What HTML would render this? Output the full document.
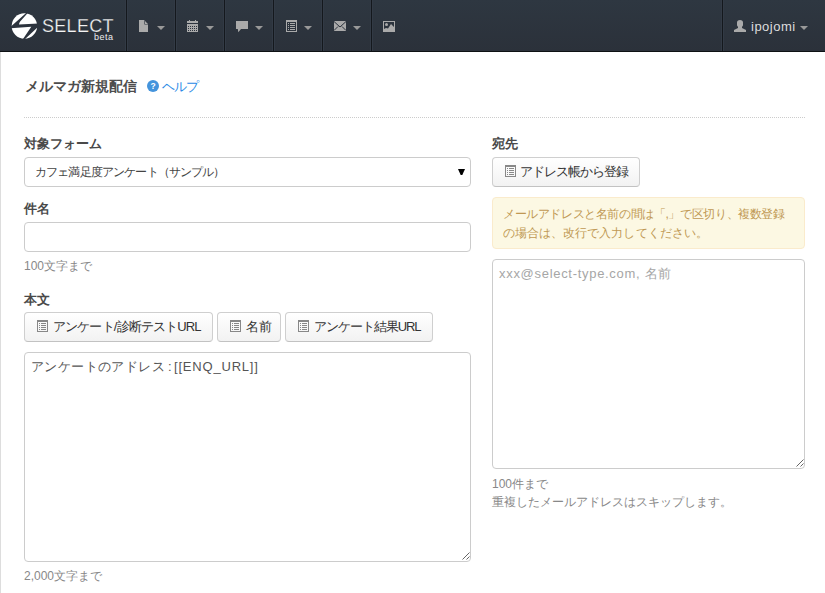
<!DOCTYPE html>
<html><head><meta charset="utf-8">
<style>
*{box-sizing:border-box;margin:0;padding:0}
html,body{width:825px;height:593px;overflow:hidden;background:#fff}
body{position:relative;font-family:"Liberation Sans",sans-serif;color:#555;font-size:13px}
.a{position:absolute;white-space:nowrap;line-height:1}
#nav{position:absolute;left:0;top:0;width:825px;height:52px;background:linear-gradient(#2e3741,#2b313a);border-bottom:1px solid #0e1114}
.sep{position:absolute;top:0;width:1px;height:51px;background:#14181d;box-shadow:1px 0 0 #323a45,-1px 0 0 #323a45}
.caret{position:absolute;top:26px;width:0;height:0;border-left:4px solid transparent;border-right:4px solid transparent;border-top:4px solid #999}
#lb{position:absolute;left:0;top:52px;width:1px;height:541px;background:#ddd}
.lbl{font-weight:bold;color:#4a4a4a;font-size:13px}
.box{position:absolute;border:1px solid #ccc;border-radius:4px;background:#fff}
.btn{position:absolute;border:1px solid #cfcfcf;border-bottom-color:#c2c2c2;border-radius:4px;background:linear-gradient(#fff,#f2f2f2);height:30px}
.bt{font-size:13px;color:#333}
.grip{position:absolute;width:8px;height:8px}
.help{color:#888;font-size:12px}
</style></head><body>
<div id="nav">
  <svg style="position:absolute;left:8px;top:10px" width="32" height="32" viewBox="0 0 593 593">
    <circle cx="304" cy="295" r="236" fill="#fff"/>
    <path d="M352 40 L378 40 L225 215 Q205 245 205 268 L560 248 L560 312 L312 540 L275 540 L432 310 L48 338 L48 310 Z" fill="#2c333d"/>
  </svg>
  <div class="a" style="left:42px;top:17px;font-size:18px;color:#f4f4f4;letter-spacing:0.3px;-webkit-text-stroke:0.25px #2d343e">SELECT</div>
  <div class="a" style="left:94px;top:33px;font-size:9px;color:#eee;letter-spacing:0.5px">beta</div>
  <div class="sep" style="left:126px"></div>
  <div class="sep" style="left:175px"></div>
  <div class="sep" style="left:224px"></div>
  <div class="sep" style="left:273px"></div>
  <div class="sep" style="left:322px"></div>
  <div class="sep" style="left:371px"></div>
  <div class="sep" style="left:722px"></div>
  <!-- file icon -->
  <svg style="position:absolute;left:139px;top:20px" width="9" height="12"><path d="M0 0H5.4V4.6H9V12H0Z M6 1V4H9Z" fill="#aaa"/></svg>
  <div class="caret" style="left:157px"></div>
  <!-- calendar -->
  <svg style="position:absolute;left:187px;top:19px" width="11" height="14"><path d="M0 2H11V4H0Z M2 1h1v1H2Z M8 1h1v1H8Z M0 5H11V13H0Z" fill="#aaa"/><g fill="#2c333d"><rect x="1" y="7" width="1" height="1"/><rect x="3" y="7" width="1" height="1"/><rect x="5" y="7" width="1" height="1"/><rect x="7" y="7" width="1" height="1"/><rect x="9" y="7" width="1" height="1"/><rect x="1" y="9" width="1" height="1"/><rect x="3" y="9" width="1" height="1"/><rect x="5" y="9" width="1" height="1"/><rect x="7" y="9" width="1" height="1"/><rect x="9" y="9" width="1" height="1"/><rect x="1" y="11" width="1" height="1"/><rect x="3" y="11" width="1" height="1"/><rect x="5" y="11" width="1" height="1"/><rect x="7" y="11" width="1" height="1"/><rect x="9" y="11" width="1" height="1"/></g></svg>
  <div class="caret" style="left:206px"></div>
  <!-- comment -->
  <svg style="position:absolute;left:236px;top:21px" width="12" height="12"><path d="M0 0H12V8H5L2.3 11.3L1.8 8H0Z" fill="#aaa"/></svg>
  <div class="caret" style="left:255px"></div>
  <!-- list-alt -->
  <svg style="position:absolute;left:286px;top:20px" width="11" height="12"><path d="M0 0H11V12H0Z M1 2V11H10V2Z" fill="#aaa" fill-rule="evenodd"/>
    <g fill="#aaa"><rect x="2" y="3" width="1" height="1"/><rect x="4" y="3" width="5" height="1"/><rect x="2" y="5" width="1" height="1"/><rect x="4" y="5" width="5" height="1"/><rect x="2" y="7" width="1" height="1"/><rect x="4" y="7" width="5" height="1"/><rect x="2" y="9" width="1" height="1"/><rect x="4" y="9" width="5" height="1"/></g></svg>
  <div class="caret" style="left:304px"></div>
  <!-- envelope -->
  <svg style="position:absolute;left:334px;top:21px" width="12" height="10"><rect width="12" height="10" fill="#aaa"/><path d="M0 0.5L6 6L12 0.5 M0 9.5L4 5.5 M12 9.5L8 5.5" stroke="#2c333d" stroke-width="1" fill="none"/></svg>
  <div class="caret" style="left:353px"></div>
  <!-- picture -->
  <svg style="position:absolute;left:383px;top:21px" width="12" height="11"><path d="M0 0H12V11H0Z M1 1V10H11V1Z" fill="#aaa" fill-rule="evenodd"/><circle cx="3.5" cy="3.5" r="1.5" fill="#aaa"/><path d="M1 8L3 7L5 7.5L8 3L11 6V10H1Z" fill="#aaa"/></svg>
  <!-- user -->
  <svg style="position:absolute;left:734px;top:20px" width="12" height="12"><path d="M3 2.5Q3 0 6 0Q9 0 9 2.5V5Q9 6 8 6.8V8L12 10V12H0V10L4 8V6.8Q3 6 3 5Z" fill="#aaa"/></svg>
  <div class="a" style="left:751px;top:20px;font-size:13px;color:#ddd;letter-spacing:0.5px">ipojomi</div>
  <div class="caret" style="left:800px"></div>
</div>
<div id="lb"></div>

<div class="a lbl" style="left:25px;top:79px;font-size:14px;color:#4d4d4d">メルマガ新規配信</div>
<svg style="position:absolute;left:147px;top:80px" width="12" height="12"><circle cx="6" cy="6" r="6" fill="#4494dc"/><text x="6" y="9.2" font-size="8.5" font-weight="bold" text-anchor="middle" fill="#fff" font-family="Liberation Sans">?</text></svg>
<div class="a" style="left:162px;top:80px;font-size:13px;color:#2a8ae6;letter-spacing:-1px">ヘルプ</div>
<div style="position:absolute;left:24px;top:117px;width:781px;height:0;border-top:1px dotted #ccc"></div>

<div class="a lbl" style="left:24px;top:137px">対象フォーム</div>
<div class="box" style="left:24px;top:157px;width:447px;height:30px"></div>
<div class="a" style="left:35px;top:166px;font-size:12px;color:#444;letter-spacing:-0.85px">カフェ満足度アンケート（サンプル）</div>
<svg style="position:absolute;left:458px;top:169px" width="7" height="6"><path d="M0 0H7L4.3 6H2.7Z" fill="#000"/></svg>

<div class="a lbl" style="left:24px;top:202px">件名</div>
<div class="box" style="left:24px;top:222px;width:447px;height:30px"></div>
<div class="a help" style="left:24px;top:260px">100文字まで</div>

<div class="a lbl" style="left:24px;top:293px">本文</div>
<div class="btn" style="left:24px;top:312px;width:189px"></div>
<div class="btn" style="left:217px;top:312px;width:64px"></div>
<div class="btn" style="left:285px;top:312px;width:148px"></div>
<svg style="position:absolute;left:37px;top:320px" width="11" height="12"><path d="M0 0H11V12H0Z M1 2V11H10V2Z" fill="#888" fill-rule="evenodd"/><g fill="#888"><rect x="2" y="3" width="1" height="1"/><rect x="4" y="3" width="5" height="1"/><rect x="2" y="5" width="1" height="1"/><rect x="4" y="5" width="5" height="1"/><rect x="2" y="7" width="1" height="1"/><rect x="4" y="7" width="5" height="1"/><rect x="2" y="9" width="1" height="1"/><rect x="4" y="9" width="5" height="1"/></g></svg><div class="a bt" style="left:53px;top:320px;letter-spacing:-0.85px">アンケート/診断テストURL</div><svg style="position:absolute;left:230px;top:320px" width="11" height="12"><path d="M0 0H11V12H0Z M1 2V11H10V2Z" fill="#888" fill-rule="evenodd"/><g fill="#888"><rect x="2" y="3" width="1" height="1"/><rect x="4" y="3" width="5" height="1"/><rect x="2" y="5" width="1" height="1"/><rect x="4" y="5" width="5" height="1"/><rect x="2" y="7" width="1" height="1"/><rect x="4" y="7" width="5" height="1"/><rect x="2" y="9" width="1" height="1"/><rect x="4" y="9" width="5" height="1"/></g></svg><div class="a bt" style="left:246px;top:320px">名前</div><svg style="position:absolute;left:298px;top:320px" width="11" height="12"><path d="M0 0H11V12H0Z M1 2V11H10V2Z" fill="#888" fill-rule="evenodd"/><g fill="#888"><rect x="2" y="3" width="1" height="1"/><rect x="4" y="3" width="5" height="1"/><rect x="2" y="5" width="1" height="1"/><rect x="4" y="5" width="5" height="1"/><rect x="2" y="7" width="1" height="1"/><rect x="4" y="7" width="5" height="1"/><rect x="2" y="9" width="1" height="1"/><rect x="4" y="9" width="5" height="1"/></g></svg><div class="a bt" style="left:314px;top:320px;letter-spacing:-1.05px">アンケート結果URL</div>
<div class="box" style="left:24px;top:352px;width:447px;height:210px"></div>
<div class="a" style="left:31px;top:360px;font-size:13px;color:#555;letter-spacing:0.4px">アンケートのアドレス<span style="margin-left:3px">:</span><span style="margin-left:2px;letter-spacing:0.8px">[[ENQ_URL]]</span></div>
<svg class="grip" style="left:462px;top:552px" width="8" height="8"><path d="M0.5 7.5L7.5 0.5 M4.5 7.5L7.5 4.5" stroke="#666" stroke-width="1"/></svg>
<div class="a help" style="left:24px;top:570px">2,000文字まで</div>

<div class="a lbl" style="left:492px;top:137px">宛先</div>
<div class="btn" style="left:492px;top:157px;width:148px"></div>
<svg style="position:absolute;left:505px;top:165px" width="11" height="12"><path d="M0 0H11V12H0Z M1 2V11H10V2Z" fill="#888" fill-rule="evenodd"/><g fill="#888"><rect x="2" y="3" width="1" height="1"/><rect x="4" y="3" width="5" height="1"/><rect x="2" y="5" width="1" height="1"/><rect x="4" y="5" width="5" height="1"/><rect x="2" y="7" width="1" height="1"/><rect x="4" y="7" width="5" height="1"/><rect x="2" y="9" width="1" height="1"/><rect x="4" y="9" width="5" height="1"/></g></svg><div class="a bt" style="left:520px;top:165px;letter-spacing:-0.95px">アドレス帳から登録</div>
<div style="position:absolute;left:492px;top:197px;width:313px;height:52px;background:#fcf8e3;border:1px solid #faebcc;border-radius:4px"></div>
<div class="a" style="left:503px;top:208px;font-size:12px;color:#c09853;letter-spacing:-0.39px">メールアドレスと名前の間は「,」で区切り、複数登録</div><div class="a" style="left:503px;top:226.5px;font-size:12px;color:#c09853;letter-spacing:0.05px">の場合は、改行で入力してください。</div>
<div class="box" style="left:492px;top:259px;width:313px;height:210px"></div>
<div class="a" style="left:499px;top:267px;font-size:13px;color:#a6a6a6;letter-spacing:0.7px">xxx@select-type.com, 名前</div>
<svg class="grip" style="left:796px;top:459px" width="8" height="8"><path d="M0.5 7.5L7.5 0.5 M4.5 7.5L7.5 4.5" stroke="#666" stroke-width="1"/></svg>
<div class="a help" style="left:492px;top:474.5px;line-height:18px">100件まで<br>重複したメールアドレスはスキップします。</div>
</body></html>
